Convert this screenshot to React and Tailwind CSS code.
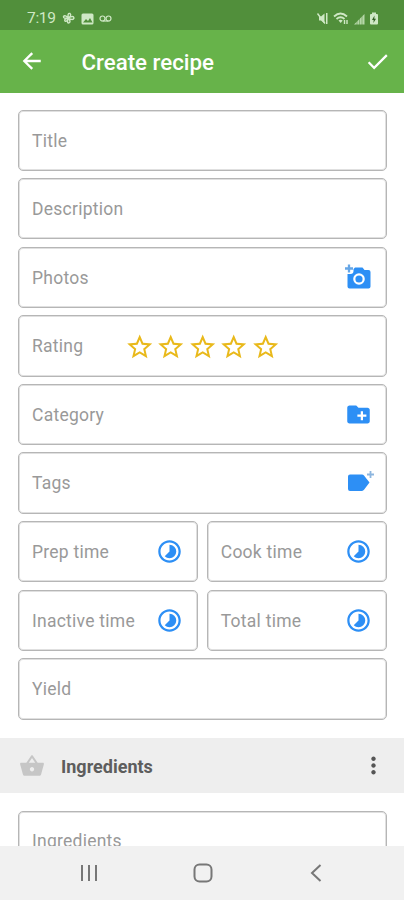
import React from 'react';

const BLUE = '#2d8ff5';

function Star() {
  return (
    <svg className="h-[30px] w-[31.4px] shrink-0" viewBox="0 0 24 24" fill="#e9b91b">
      <path d="M22 9.24l-7.19-.62L12 2 9.19 8.63 2 9.24l5.46 4.73L5.82 21 12 17.27 18.18 21l-1.63-7.03L22 9.24zM12 15.4l-3.76 2.27 1-4.28-3.32-2.88 4.38-.38L12 6.1l1.71 4.04 4.38.38-3.32 2.88 1 4.28L12 15.4z" />
    </svg>
  );
}

function Timelapse() {
  return (
    <svg className="size-[27px] shrink-0" viewBox="0 0 24 24" fill={BLUE}>
      <path d="M16.24 7.76A5.974 5.974 0 0012 6v6l-4.24 4.24c2.34 2.34 6.14 2.34 8.49 0a5.99 5.99 0 00-.01-8.48zM12 2C6.48 2 2 6.48 2 12s4.48 10 10 10 10-4.48 10-10S17.52 2 12 2zm0 18c-4.42 0-8-3.58-8-8s3.58-8 8-8 8 3.58 8 8-3.58 8-8 8z" />
    </svg>
  );
}

function AddPhoto() {
  return (
    <svg className="h-[30px] w-[30px] shrink-0" viewBox="0 0 30 30">
      <path fill={BLUE} d="M13 5.500h7.500l2 2.500h4q2 0 2 2V24.500q0 2-2 2H7.500q-2 0-2-2V12h3q3 0 3-3V7z" />
      <circle cx="17" cy="17" r="4.700" fill="none" stroke="#fff" strokeWidth="2.200" />
      <path d="M7 2.500v8M3 6.500h8" stroke="#66a6e6" strokeWidth="2.300" />
    </svg>
  );
}

function AddFolder() {
  return (
    <svg className="h-[27px] w-[27px] shrink-0" viewBox="0 0 24 24" fill={BLUE}>
      <path d="M20 6h-8l-2-2H4c-1.110 0-1.990.89-1.990 2L2 18c0 1.110.89 2 2 2h16c1.110 0 2-.89 2-2V8c0-1.110-.89-2-2-2zm-1 8h-3v3h-2v-3h-3v-2h3V9h2v3h3v2z" />
    </svg>
  );
}

function AddTag() {
  return (
    <svg className="h-[30px] w-[30px] shrink-0 overflow-visible" viewBox="0 0 30 30">
      <path fill={BLUE} d="M8 6.500H20q1.200 0 2 1.100L27.500 14.500l-5.500 7.300q-.8 1.100-2 1.100H8q-2 0-2-2V8.500q0-2 2-2z" />
      <path d="M28.500 3v7M25 6.500h7" stroke="#8db6df" strokeWidth="1.800" />
    </svg>
  );
}

function Field({ label, children }) {
  return (
    <div className="flex h-[61.4px] min-w-0 flex-1 items-center rounded-[5px] border border-[#b6b6b6] bg-white pl-[13px] pr-[14.500px] shadow-[inset_0_0_0_1px_#e0e0e0]">
      <span className="whitespace-nowrap pt-px text-[17.500px] tracking-[0.250px] text-[#999]">{label}</span>
      {children && <div className="ml-auto flex items-center">{children}</div>}
    </div>
  );
}

function StatusBar() {
  return (
    <div className="flex h-[30px] items-center bg-[#518f3b] pl-[27px] pr-[25px] pt-[7px] text-[#cfe8c5]">
      <span className="w-[29px] text-[15.500px] tracking-[-0.300px]">7:19</span>
      <svg className="ml-[6px] size-[13px]" viewBox="0 0 13 13" fill="none" stroke="currentColor" strokeWidth="1.400">
        <path d="M6.500 6Q3 2.500 1.500 4.500 1 7 6.500 6zM6.500 6Q5 1 8 1.500 10 3 6.500 6zM6.500 6q5-3 5.500 0Q11 9 6.500 6zM6.500 6q3 4.500 0 5-2 0 0-5zM6.500 6Q1.500 7 3 9 5 10 6.500 6z" />
      </svg>
      <svg className="ml-[6px] h-[12px] w-[13px]" viewBox="0 0 13 12">
        <rect x=".5" y=".5" width="12" height="11" rx="1.500" fill="currentColor" />
        <path d="M2 9.500l3-3.500 2 2 2-3 2.500 4.500z" fill="#518f3b" />
      </svg>
      <svg className="ml-[5px] h-[10px] w-[13px]" viewBox="0 0 13 10" fill="none" stroke="currentColor" strokeWidth="1.200">
        <circle cx="3.500" cy="4.500" r="2.500" />
        <circle cx="9.500" cy="4.500" r="2.500" />
        <path d="M3.500 7h6" />
      </svg>
      <div className="ml-auto flex items-center gap-[4px]">
        <svg className="h-[13px] w-[14px]" viewBox="0 0 14 13" fill="currentColor">
          <path d="M4 4.500h2l3.500-3v10L6 8.500H4zM11 1h1.500v11H11z" />
          <path d="M2.500 1.500l7.500 10" stroke="currentColor" strokeWidth="1.400" />
        </svg>
        <svg className="h-[13px] w-[16px]" viewBox="0 0 16 13" fill="none" stroke="currentColor" strokeWidth="1.800">
          <path d="M1 4.500Q7.500-1.500 14 4.500M3.500 7Q7.500 3.500 11.500 7" />
          <path d="M5.500 8.500L7.700 11l2-2.500Q7.700 7 5.500 8.500z" fill="currentColor" stroke="none" />
          <path d="M11.500 12V8M14 8v4" strokeWidth="1.400" />
        </svg>
        <svg className="h-[12px] w-[12px]" viewBox="0 0 12 12">
          <path d="M1 11.500L11.500 1v10.500z" fill="currentColor" opacity=".8" />
          <path d="M4 8v4M6.500 5v7M9 3v9" stroke="#518f3b" strokeWidth=".5" />
        </svg>
        <svg className="h-[13px] w-[10px]" viewBox="0 0 10 13">
          <path d="M3 .5h4V2h1q1 0 1 1v8.500q0 1-1 1H2q-1 0-1-1V3q0-1 1-1h1z" fill="currentColor" />
          <path d="M5.500 3.500L3 8h1.700L4.400 11 7 6.800H5.300z" fill="#315f23" />
        </svg>
      </div>
    </div>
  );
}

export default function App() {
  return (
    <div className="flex h-[900px] w-[404px] flex-col overflow-hidden bg-white font-[Roboto,sans-serif]">
      <StatusBar />
      <header className="flex h-[62.500px] shrink-0 items-center bg-[#67b34a] pl-[18px] pr-[13px] text-white">
        <svg className="size-[28px]" viewBox="0 0 24 24" fill="currentColor">
          <path d="M19.500 11H7.830l5.090-5.090L11.500 4.500 4 12l7.500 7.500 1.410-1.410L7.830 13H19.500v-2z" />
        </svg>
        <h1 className="ml-[35.500px] pt-[2px] text-[22.300px] font-medium">Create recipe</h1>
        <svg className="ml-auto size-[27px]" viewBox="0 0 24 24" fill="currentColor">
          <path d="M9 16.170L4.830 12l-1.420 1.410L9 19 21 7l-1.410-1.410z" />
        </svg>
      </header>
      <main className="flex min-h-0 flex-1 flex-col overflow-hidden">
        <div className="flex h-[645.500px] shrink-0 flex-col gap-[7.200px] pl-[18px] pr-[17px] pt-[17px] [&>*]:shrink-0 [&>*]:grow-0 [&>*]:basis-auto">
          <Field label="Title" />
          <Field label="Description" />
          <Field label="Photos"><AddPhoto /></Field>
          <Field label="Rating">
            <div className="mr-[90.500px] flex pt-[2px]">
              <Star /><Star /><Star /><Star /><Star />
            </div>
          </Field>
          <Field label="Category"><AddFolder /></Field>
          <Field label="Tags"><AddTag /></Field>
          <div className="flex gap-[8.500px]">
            <Field label="Prep time"><Timelapse /></Field>
            <Field label="Cook time"><Timelapse /></Field>
          </div>
          <div className="flex gap-[8.500px]">
            <Field label="Inactive time"><Timelapse /></Field>
            <Field label="Total time"><Timelapse /></Field>
          </div>
          <Field label="Yield" />
        </div>
        <div className="flex h-[55px] shrink-0 items-center bg-[#eee] pl-[19px] pr-[17px]">
          <svg className="size-[26px]" viewBox="0 0 24 24" fill="#c6c6c6">
            <path d="M17.210 9l-4.380-6.560c-.19-.28-.51-.42-.83-.42-.32 0-.64.14-.83.430L6.790 9H2c-.55 0-1 .45-1 1 0 .09.010.18.040.270l2.540 9.270c.23.840 1 1.460 1.920 1.460h13c.92 0 1.690-.62 1.930-1.460l2.540-9.270L23 10c0-.55-.45-1-1-1h-4.790zM9 9l3-4.400L15 9H9zm3 8c-1.100 0-2-.9-2-2s.9-2 2-2 2 .9 2 2-.9 2-2 2z" />
          </svg>
          <h2 className="ml-[16px] pt-px text-[18px] font-bold text-[#5d5d5d]">Ingredients</h2>
          <svg className="ml-auto size-[27px]" viewBox="0 0 24 24" fill="#555">
            <path d="M12 8c1.100 0 2-.9 2-2s-.9-2-2-2-2 .9-2 2 .9 2 2 2zm0 2c-1.100 0-2 .9-2 2s.9 2 2 2 2-.9 2-2-.9-2-2-2zm0 6c-1.100 0-2 .9-2 2s.9 2 2 2 2-.9 2-2-.9-2-2-2z" />
          </svg>
        </div>
        <div className="flex shrink-0 pl-[18px] pr-[17px] pt-[17.500px] [&_span]:pb-[2px]">
          <Field label="Ingredients" />
        </div>
      </main>
      <nav className="flex h-[54px] shrink-0 items-center justify-between bg-[#f1f1f1] pl-[79px] pr-[78px]">
        <svg className="size-[20px]" viewBox="0 0 20 20" stroke="#777" strokeWidth="2">
          <path d="M3 2v16M10 2v16M17 2v16" />
        </svg>
        <svg className="size-[20px]" viewBox="0 0 20 20" fill="none" stroke="#777" strokeWidth="2">
          <rect x="1.500" y="1.500" width="17" height="17" rx="5" />
        </svg>
        <svg className="size-[20px]" viewBox="0 0 20 20" fill="none" stroke="#777" strokeWidth="2">
          <path d="M14.500 2L6 10l8.500 8" />
        </svg>
      </nav>
    </div>
  );
}
